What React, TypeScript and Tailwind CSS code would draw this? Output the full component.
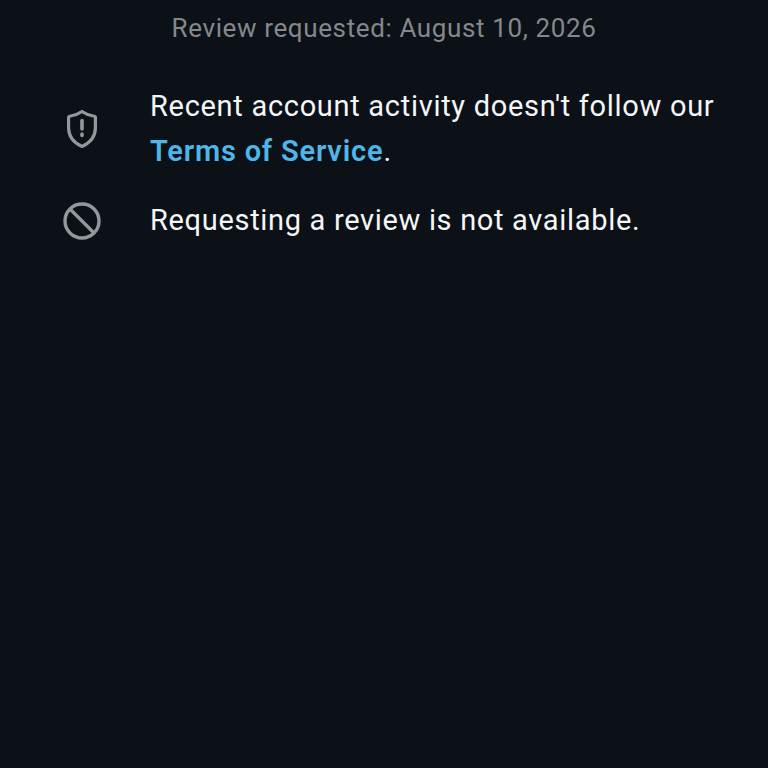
import React from 'react';

const App: React.FC = () => {
  return (
    <div className="w-[768px] h-[768px] overflow-hidden bg-[#0b1116] font-['Roboto',sans-serif] text-[29px] leading-[45px] tracking-[0.68px]">
      <p className="pt-[6px] text-center text-[26px] leading-[45px] tracking-[0.62px] text-[#84888b]">
        Review requested: August 10, 2026
      </p>
      <div className="mt-[33px] flex pl-[62px]">
        <div className="w-[88px] shrink-0 pt-[24px]">
          <svg width="40" height="42" viewBox="0 0 40 42" fill="none" stroke="#94989b" strokeWidth="3.2" strokeLinejoin="round">
            <path d="M20 3.500C23.500 6 27.500 7.500 31.500 8C32.500 8.100 33.400 8.600 33.400 9.500V20C33.400 28.500 27.500 35 20 38.500C12.500 35 6.600 28.500 6.600 20V9.500C6.600 8.600 7.500 8.100 8.500 8C12.500 7.500 16.500 6 20 3.500Z" />
            <path d="M20 12.500V21M20 26V27.500" strokeLinecap="round" strokeWidth="3.6" />
          </svg>
        </div>
        <p className="tracking-[0.7px] text-[#f4f6f7]">
          Recent account activity doesn't follow our
          <br />
          <span className="font-semibold tracking-[0.8px] text-[#4fb6ea]">Terms of Service</span>.
        </p>
      </div>
      <div className="mt-[24px] flex pl-[62px]">
        <div className="w-[88px] shrink-0 pt-[3px]">
          <svg width="40" height="40" viewBox="0 0 40 40" fill="none" stroke="#94989b" strokeWidth="3.4">
            <circle cx="20" cy="20" r="17" />
            <path d="M8 8 32 32" />
          </svg>
        </div>
        <p className="text-[#f4f6f7]">Requesting a review is not available.</p>
      </div>
    </div>
  );
};

export default App;
